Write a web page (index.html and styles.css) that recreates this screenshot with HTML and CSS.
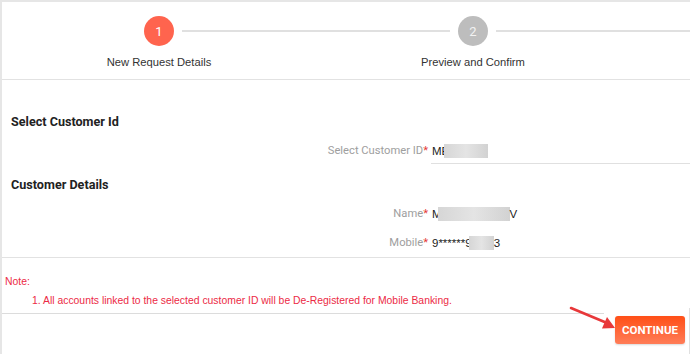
FILE: index.html
```html
<!DOCTYPE html>
<html>
<head>
<meta charset="utf-8">
<link rel="stylesheet" href="styles.css">
</head>
<body>
<div class="page">
  <div class="stepper">
    <div class="track">
      <span class="spacer"></span>
      <span class="circle active">1</span>
      <span class="line mid"></span>
      <span class="circle">2</span>
      <span class="line end"></span>
    </div>
    <div class="labels">
      <span class="label">New Request Details</span>
      <span class="label">Preview and Confirm</span>
    </div>
  </div>

  <div class="form">
    <h3 class="section-title">Select Customer Id</h3>
    <div class="row">
      <span class="field-label">Select Customer ID<span class="req">*</span></span>
      <span class="field-value underline">ME<span class="blur b-id"></span></span>
    </div>
    <h3 class="section-title">Customer Details</h3>
    <div class="row">
      <span class="field-label">Name<span class="req">*</span></span>
      <span class="field-value">M<span class="blur b-name"></span>V</span>
    </div>
    <div class="row">
      <span class="field-label">Mobile<span class="req">*</span></span>
      <span class="field-value">9******9<span class="blur b-mob"></span>3</span>
    </div>
  </div>

  <div class="note">
    <div class="note-title">Note:</div>
    <div class="note-item">1. All accounts linked to the selected customer ID will be De-Registered for Mobile Banking.</div>
  </div>

  <div class="footer">
    <div class="rule"></div>
    <div class="actions">
      <button class="btn">CONTINUE</button>
    </div>
    <svg class="arrow" width="50" height="26" viewBox="0 0 50 26">
      <line x1="2" y1="2" x2="38" y2="17" stroke="#e8383a" stroke-width="2.6" stroke-linecap="round"/>
      <polygon points="46,22 33,22.5 38,11" fill="#e8383a"/>
    </svg>
  </div>
</div>
</body>
</html>
```

FILE: styles.css
```css
* { box-sizing: border-box; }
html, body { margin: 0; padding: 0; background: #fff; }
body { width: 690px; height: 354px; overflow: hidden; font-family: "Liberation Sans", Arial, sans-serif; }

.page {
  border-top: 2px solid #e6e6e6;
  border-left: 2px solid #e6e6e6;
  height: 354px;
  position: relative;
}

/* stepper */
.stepper {
  padding-top: 14px;
  padding-bottom: 10px;
  border-bottom: 1px solid #e2e2e2;
}
.track { display: flex; align-items: center; height: 30px; }
.spacer { width: 142px; flex: none; }
.circle {
  width: 30px; height: 30px; border-radius: 50%;
  flex: none;
  background: #bdbdbd; color: #f2f2f2;
  font-family: Roboto, "Liberation Sans", sans-serif;
  font-size: 13px;
  display: flex; align-items: center; justify-content: center;
}
.circle.active { background: #ff644e; color: #fff; }
.line { height: 2px; background: #e0e0e0; flex: none; }
.line.mid { width: 268px; margin: 0 8px; }
.line.end { flex: 1; margin-left: 8px; }

.labels { display: grid; grid-template-columns: 314px 314px; margin-top: 9px; }
.label { text-align: center; font-size: 11.2px; line-height: 14px; color: #333; }

/* form */
.form {
  padding: 34px 0 6px 9px;
  border-bottom: 1px solid #e2e2e2;
  font-family: Roboto, "Liberation Sans", sans-serif;
}
.section-title {
  margin: 0;
  font-size: 12.6px; line-height: 16px; font-weight: bold; color: #222;
}
.row {
  display: grid;
  grid-template-columns: 417px 1fr;
  column-gap: 4px;
  margin: 13px 0;
  font-size: 11.2px; line-height: 16px;
}
.row:last-child { margin-bottom: 0; }
.field-label { text-align: right; color: #9e9e9e; }
.req { color: #e53935; }
.field-value { color: #222; white-space: nowrap; font-family: "Liberation Sans", Arial, sans-serif; font-size: 11.5px; }
.field-value.underline { border-bottom: 1px solid #e0e0e0; padding-bottom: 4px; margin-left: -1px; padding-left: 1px; }
.blur {
  display: inline-block; vertical-align: -3px; height: 14px;
  background: linear-gradient(90deg, #d6d6d6, #e4e4e4 50%, #d2d2d2);
}
.b-id { width: 44px; margin-left: -5px; }
.b-name { width: 72px; margin-left: -4px; }
.b-mob { width: 25px; margin-left: -3px; }

/* note */
.note {
  padding: 17px 0 0 3px;
  color: #ec2a45;
  font-size: 10.4px; line-height: 14px;
}
.note-item { margin-top: 5px; padding-left: 27px; }

/* footer */
.footer { display: flex; position: relative; }
.rule { flex: 1; margin-top: 5px; border-top: 1px solid #dcdcdc; height: 0; }
.actions {
  width: 86px; flex: none;
  padding: 8px 0 10px 11px;
  border-right: 1px solid #e0e0e0;
}
.btn {
  width: 70px; height: 28px;
  border: none; border-radius: 3px;
  background: linear-gradient(#ff4f17, #ff7d58);
  color: #fff;
  font-family: Roboto, "Liberation Sans", sans-serif;
  font-size: 11.5px; font-weight: bold;
  padding: 0;
  box-shadow: 0 1px 2px rgba(0,0,0,0.15);
}
.arrow { position: absolute; left: 567px; top: -2px; }
```
